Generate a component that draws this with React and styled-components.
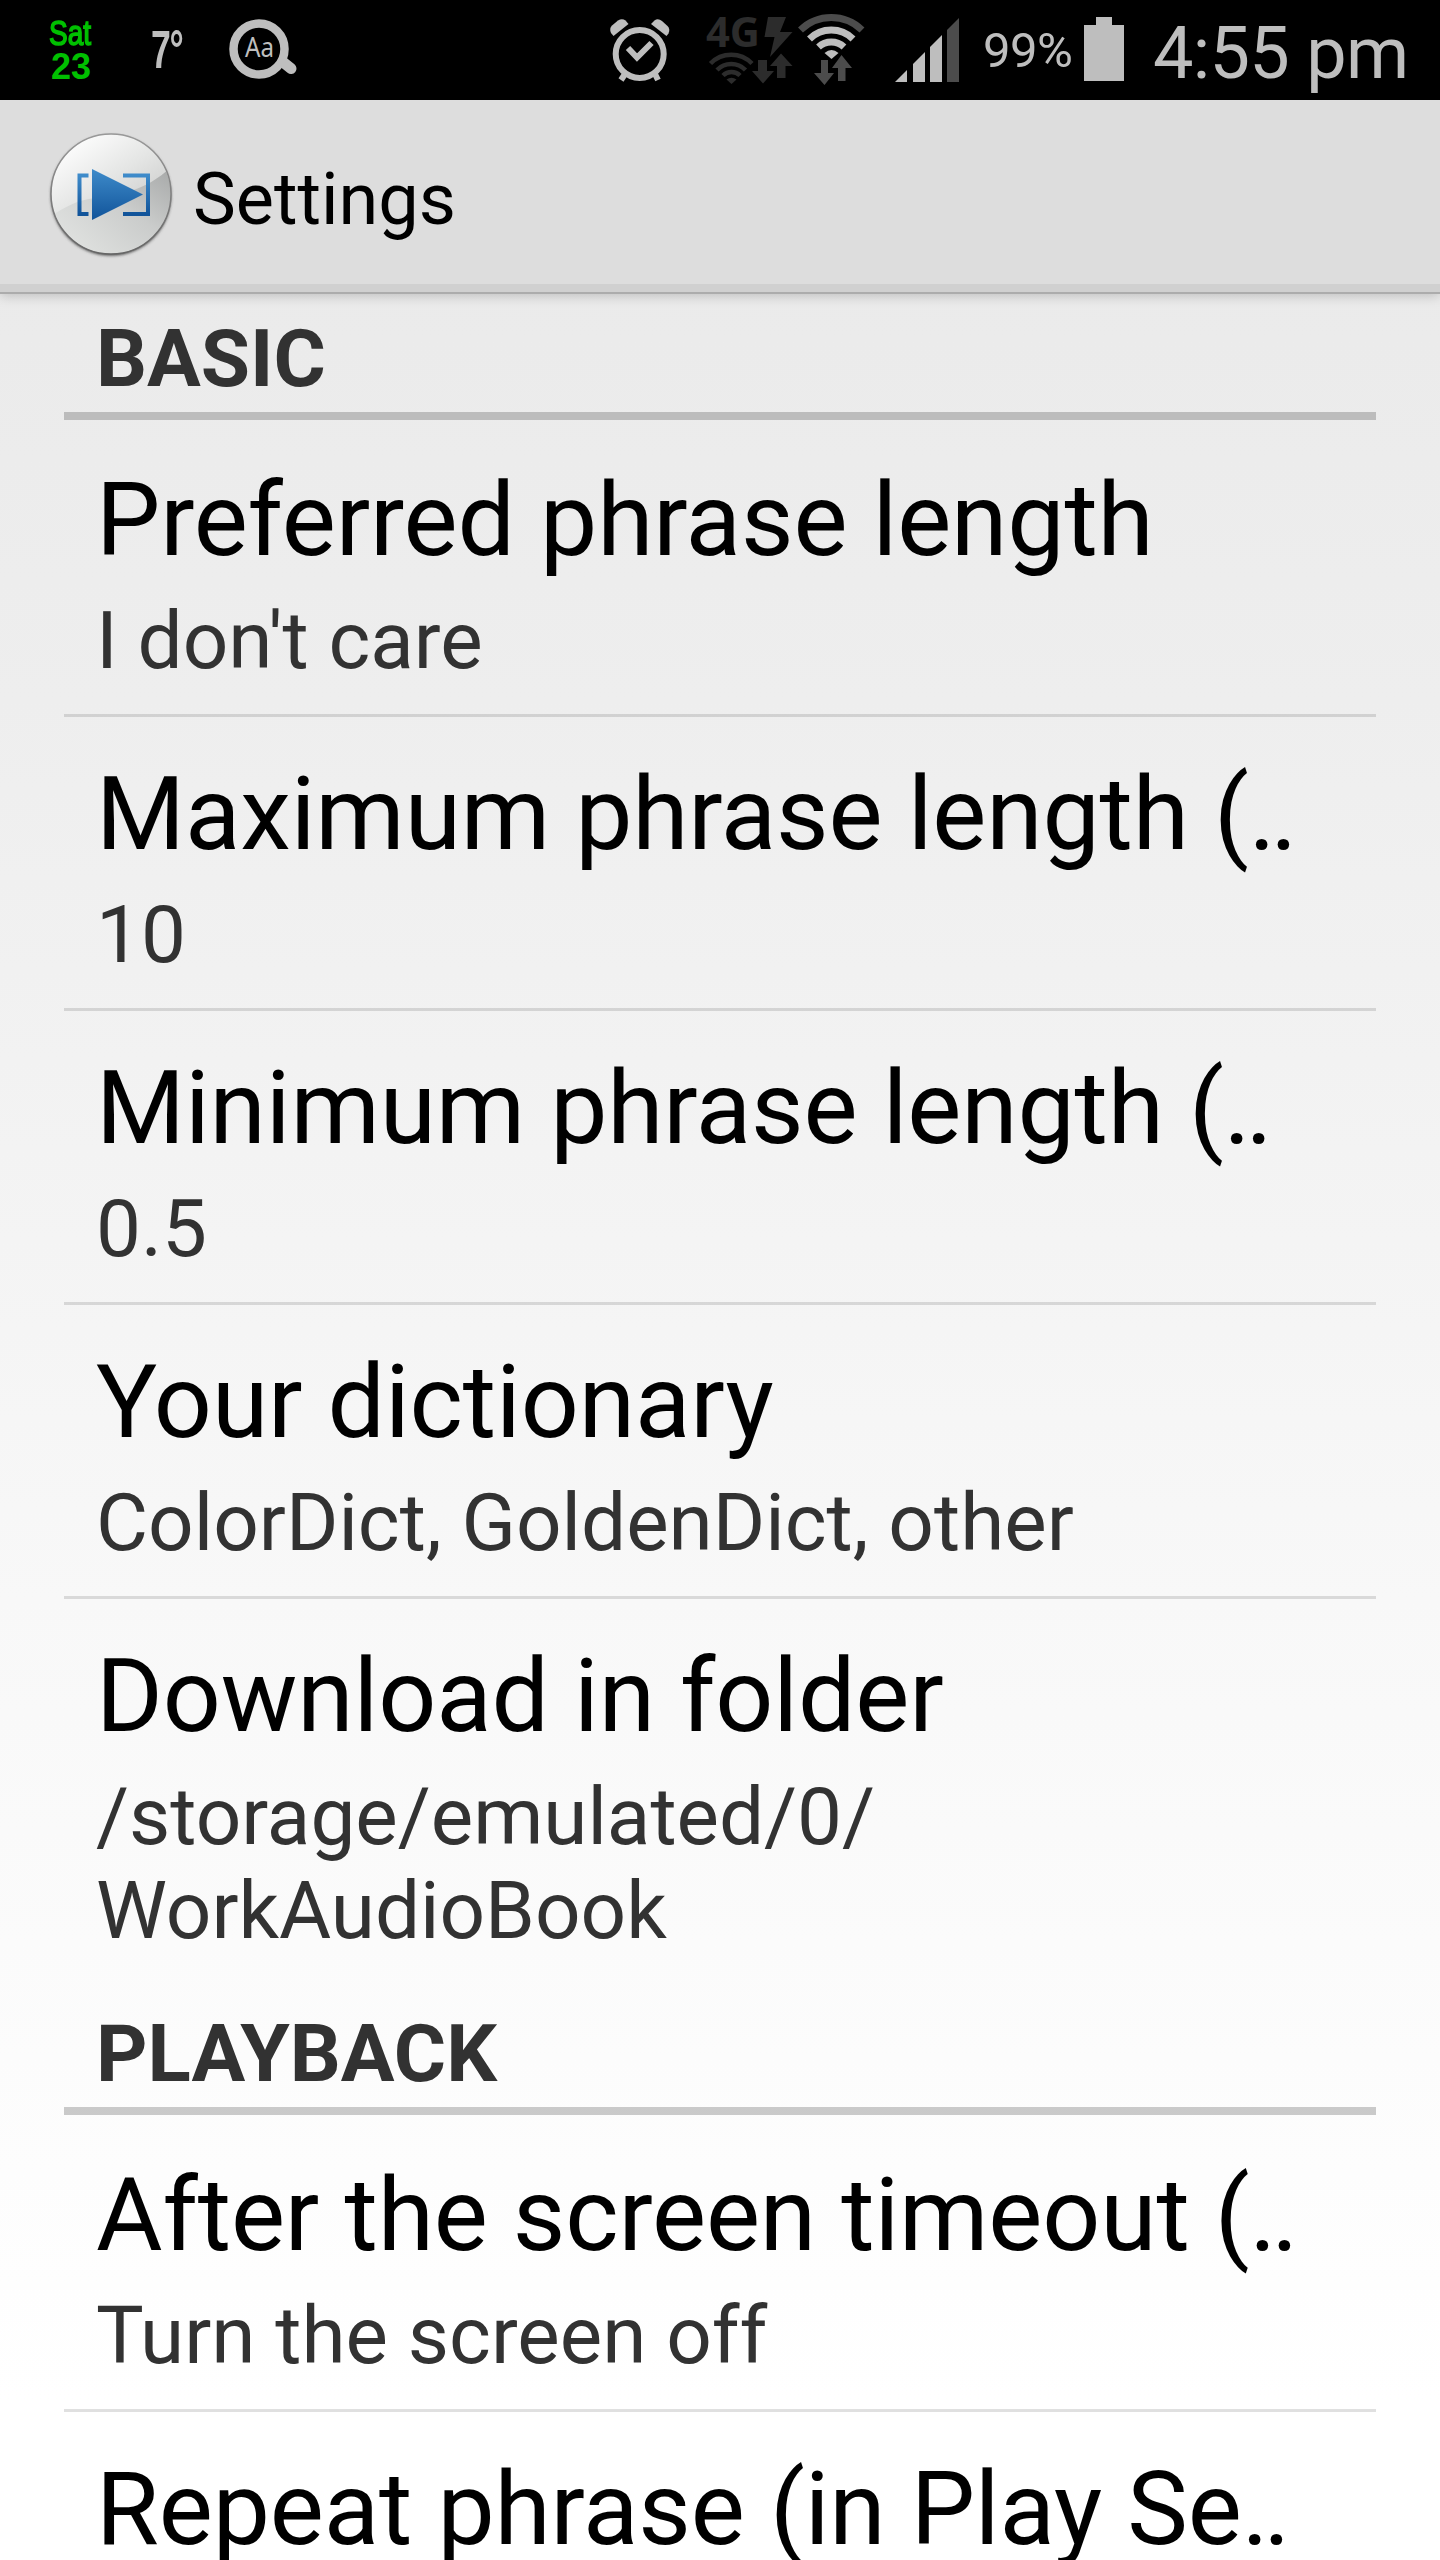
import React from "react";
import styled, { createGlobalStyle } from "styled-components";

const Global = createGlobalStyle`
  html, body { margin: 0; padding: 0; background: #fff; }
  body { font-family: Roboto, "Liberation Sans", sans-serif; overflow: hidden; }
`;

const Screen = styled.div`
  width: 1440px;
  height: 2560px;
  overflow: hidden;
  display: flex;
  flex-direction: column;
  background: linear-gradient(#e9e9e9 100px, #eeeeee 700px, #f8f8f8 1600px, #ffffff 2400px);
`;

const StatusBar = styled.header`
  height: 100px;
  flex: none;
  display: flex;
  align-items: flex-start;
  background: #000;
  color: #bebebe;
  svg { display: block; flex: none; }
`;

const DateBadge = styled.div`
  width: 44px;
  margin: 16px 0 0 49px;
  flex: none;
  color: #00c000;
  font-family: "Liberation Sans", sans-serif;
`;

const Weekday = styled.div`
  font-size: 35px;
  line-height: 34px;
  -webkit-text-stroke: 1.6px #00c000;
  transform: scaleX(0.8);
  transform-origin: left;
`;

const Day = styled.div`
  padding-left: 2px;
  font-size: 36px;
  line-height: 34px;
  font-weight: 700;
`;

const Temperature = styled.div`
  width: 32px;
  margin: 22px 37px 0 58px;
  font: 700 54px/54px "Liberation Sans", sans-serif;
  letter-spacing: -2px;
  transform: scaleX(0.66);
  transform-origin: left;
  white-space: nowrap;
`;

const Spacer = styled.div`
  flex: 1;
`;

const Percent = styled.div`
  width: 104px;
  box-sizing: border-box;
  padding-left: 3px;
  flex: none;
  margin-top: 21px;
  font-size: 49px;
  line-height: 60px;
  letter-spacing: -0.6px;
  white-space: nowrap;
`;

const Clock = styled.div`
  width: 287px;
  flex: none;
  margin-top: 12px;
  font-size: 72px;
  line-height: 84px;
  letter-spacing: -0.7px;
  white-space: nowrap;
`;

const ActionBar = styled.div`
  height: 192px;
  flex: none;
  box-sizing: border-box;
  display: flex;
  align-items: flex-start;
  background: #dddddd;
  border-bottom: 8px solid #d0d0d0;
  box-shadow: 0 2px 0 #acacac, 0 3px 12px rgba(0, 0, 0, 0.22);
  position: relative;
  svg { display: block; flex: none; margin: 28px 0 0 46px; }
`;

const Title = styled.h1`
  margin: 58px 0 0 13px;
  font-size: 72px;
  line-height: 84px;
  font-weight: 400;
  color: #000;
`;

const List = styled.main`
  padding: 0 64px;
`;

const Category = styled.h2`
  margin: ${(p) => (p.$spaced ? "3px" : "0")} 0 0;
  height: 128px;
  box-sizing: border-box;
  padding: 20px 32px 0;
  border-bottom: 8px solid rgba(0, 0, 0, 0.2);
  font-size: 80px;
  line-height: 94px;
  font-weight: 700;
  color: #323232;
`;

const Row = styled.section`
  box-sizing: border-box;
  min-height: 294px;
  padding: 37px 32px 26px;
  border-top: 3px solid ${(p) => (p.$first ? "transparent" : "rgba(0, 0, 0, 0.12)")};
`;

const RowTitle = styled.div`
  font-size: 102px;
  line-height: 121px;
  letter-spacing: -0.15px;
  white-space: nowrap;
  color: #000;
`;

const Dots = styled.span`
  letter-spacing: -5px;
`;

const Summary = styled.div`
  font-size: 80px;
  line-height: 94px;
  margin-top: 13px;
  color: #323232;
`;

const SearchWord = styled.text`
  font-family: "Noto Sans", sans-serif;
  font-size: 28px;
  fill: #bebebe;
`;

const NetworkLabel = styled.text`
  font-family: "Open Sans", sans-serif;
  font-size: 41px;
  font-weight: 700;
  fill: #2c2c2c;
`;

const DictionaryIcon = () => (
  <svg width="80" height="100" viewBox="220 0 80 100">
    <path d="M283.500 62.500L291 68.500" stroke="#bebebe" strokeWidth="11" strokeLinecap="round" />
    <circle cx="259" cy="49" r="25.5" fill="#000" stroke="#bebebe" strokeWidth="8.5" />
    <SearchWord x="245" y="57.2" textLength="29" lengthAdjust="spacingAndGlyphs">Aa</SearchWord>
  </svg>
);

const StatusIcons = () => (
  <svg width="380" height="100" viewBox="600 0 380 100">
    <g fill="none" stroke="#bebebe">
      <circle cx="639.7" cy="54" r="24" strokeWidth="6" />
      <path d="M628 48L637 57.500L651.5 43" strokeWidth="6" />
      <path d="M625 74L621 80M655 74L658 80" strokeWidth="6" />
    </g>
    <g fill="#bebebe">
      <path d="M613.500 36L611 33Q609 28 612 25.500L618 20.500Q622 18 625.500 20.500L628.500 24Z" />
      <path d="M651 24L654.500 20.500Q658 18 662 21L667.500 26Q670.500 29 668.500 33.500L666.500 36Z" />
    </g>
    <NetworkLabel x="706" y="46.6" textLength="54" lengthAdjust="spacingAndGlyphs">4G</NetworkLabel>
    <g fill="#2c2c2c">
      <path d="M768 17H786L780 32H792.5L770 57L774.5 37H764.5Z" />
      <path d="M758 60H767V71H774L763 83.500L752 71H758Z" />
      <path d="M777 78H785.500V66H792.500L781 53.500L770 66H777Z" />
    </g>
    <g fill="none" stroke="#2c2c2c" strokeWidth="4.5">
      <path d="M710.500 63.500A29 29 0 0 1 752 63.500" />
      <path d="M717 70A20 20 0 0 1 745.500 70" />
      <path d="M723 75.500A12 12 0 0 1 740 75.500" />
    </g>
    <path d="M726.500 79.500Q731.500 76 736.500 79.500L731.500 84Z" fill="#2c2c2c" />
    <path d="M800.500 30A44 44 0 0 1 862 30" fill="none" stroke="#4c4c4c" strokeWidth="7" />
    <g fill="none" stroke="#bebebe" strokeWidth="7">
      <path d="M809.500 39A31 31 0 0 1 853 39" />
      <path d="M818.500 47A19 19 0 0 1 844 47" />
    </g>
    <path d="M824.500 53Q831.500 47 838.500 53L831.500 59Z" fill="#bebebe" />
    <g fill="#4c4c4c">
      <path d="M821 60H828V73H834L824.500 85L814 73H821Z" />
      <path d="M838 81H845.500V68H852L841.500 55L832 68H838Z" />
      <path d="M947 30L959 18V82H947Z" />
    </g>
    <g fill="#bebebe">
      <path d="M895 82L907 70V82Z" />
      <path d="M913 64L925 52V82H913Z" />
      <path d="M930 47L942 35V82H930Z" />
    </g>
  </svg>
);

const BatteryIcon = () => (
  <svg width="69" height="100" viewBox="1084 0 69 100">
    <path d="M1084 25H1096V17H1112V25H1124V81H1084Z" fill="#bebebe" />
  </svg>
);

const AppIcon = () => (
  <svg width="134" height="134" viewBox="46 128 134 134">
    <defs>
      <linearGradient id="disc" x1="0.2" y1="0" x2="0.75" y2="0.8">
        <stop offset="0" stopColor="#ffffff" />
        <stop offset="0.5" stopColor="#e4e5e4" />
        <stop offset="1" stopColor="#c5c6c5" />
      </linearGradient>
      <linearGradient id="gloss" x1="1" y1="0" x2="0.3" y2="0.9">
        <stop offset="0" stopColor="#9c9e9e" />
        <stop offset="0.55" stopColor="#cbcdcc" />
        <stop offset="1" stopColor="#dfe1df" />
      </linearGradient>
      <linearGradient id="blue" x1="0" y1="0" x2="0" y2="1">
        <stop offset="0" stopColor="#3e8bca" />
        <stop offset="1" stopColor="#11549a" />
      </linearGradient>
      <linearGradient id="rim" x1="0" y1="0" x2="0" y2="1">
        <stop offset="0" stopColor="#999" />
        <stop offset="1" stopColor="#666" />
      </linearGradient>
      <filter id="soft" x="-20%" y="-20%" width="140%" height="140%">
        <feGaussianBlur stdDeviation="1.8" />
      </filter>
      <clipPath id="face">
        <circle cx="111" cy="194" r="59.5" />
      </clipPath>
    </defs>
    <circle cx="111" cy="195.5" r="60" fill="#444" filter="url(#soft)" />
    <circle cx="111" cy="194" r="60" fill="url(#disc)" />
    <path d="M172 166C145 192 120 194 95 198C78 200 66 206 50 217V256H172Z" fill="url(#gloss)" opacity="0.85" clipPath="url(#face)" />
    <circle cx="111" cy="194" r="60" fill="none" stroke="url(#rim)" strokeWidth="1.500" />
    <g fill="none" stroke="url(#blue)" strokeWidth="4">
      <path d="M88.500 175.500H79.500V214H88.500" />
      <path d="M123 175.500H148V214H123" />
    </g>
    <path d="M92 169L143 194.500L92 220Z" fill="url(#blue)" />
  </svg>
);

const basic = [
  { title: "Preferred phrase length", summary: "I don't care" },
  { title: "Maximum phrase length (", cut: true, summary: "10" },
  { title: "Minimum phrase length (", cut: true, summary: "0.5" },
  { title: "Your dictionary", summary: "ColorDict, GoldenDict, other" },
  { title: "Download in folder", summary: <>/storage/emulated/0/<br />WorkAudioBook</> },
];

const playback = [
  { title: "After the screen timeout (", cut: true, summary: "Turn the screen off" },
  { title: "Repeat phrase (in Play Se", cut: true },
];

const Preferences = ({ items }) =>
  items.map((item, i) => (
    <Row key={item.title} $first={i === 0}>
      <RowTitle>
        {item.title}
        {item.cut && <Dots>..</Dots>}
      </RowTitle>
      {item.summary && <Summary>{item.summary}</Summary>}
    </Row>
  ));

export default function App() {
  return (
    <>
      <Global />
      <Screen>
        <StatusBar>
          <DateBadge>
            <Weekday>Sat</Weekday>
            <Day>23</Day>
          </DateBadge>
          <Temperature>7°</Temperature>
          <DictionaryIcon />
          <Spacer />
          <StatusIcons />
          <Percent>99%</Percent>
          <BatteryIcon />
          <Clock>4:55 pm</Clock>
        </StatusBar>
        <ActionBar>
          <AppIcon />
          <Title>Settings</Title>
        </ActionBar>
        <List>
          <Category>BASIC</Category>
          <Preferences items={basic} />
          <Category $spaced>PLAYBACK</Category>
          <Preferences items={playback} />
        </List>
      </Screen>
    </>
  );
}
